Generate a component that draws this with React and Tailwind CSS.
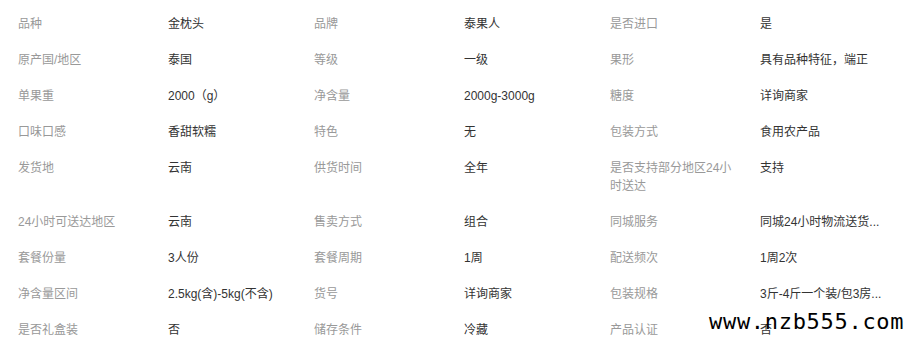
import React from 'react'

const rows = [
  ['品种', '金枕头', '品牌', '泰果人', '是否进口', '是'],
  ['原产国/地区', '泰国', '等级', '一级', '果形', '具有品种特征，端正'],
  ['单果重', '2000（g）', '净含量', '2000g-3000g', '糖度', '详询商家'],
  ['口味口感', '香甜软糯', '特色', '无', '包装方式', '食用农产品'],
  ['发货地', '云南', '供货时间', '全年', '是否支持部分地区24小时送达', '支持'],
  ['24小时可送达地区', '云南', '售卖方式', '组合', '同城服务', '同城24小时物流送货...'],
  ['套餐份量', '3人份', '套餐周期', '1周', '配送频次', '1周2次'],
  ['净含量区间', '2.5kg(含)-5kg(不含)', '货号', '详询商家', '包装规格', '3斤-4斤一个装/包3房...'],
  ['是否礼盒装', '否', '储存条件', '冷藏', '产品认证', '否'],
]

function Row({ cells }) {
  return (
    <div className="flex items-start py-[9px] leading-[18px]">
      {cells.map((text, i) =>
        i % 2 === 0 ? (
          <div key={i} className="w-[150px] shrink-0 pr-[26px] text-[#999]">
            {text}
          </div>
        ) : (
          <div key={i} className="w-[146px] shrink-0 pr-[20px] text-[#333] whitespace-nowrap overflow-hidden">
            {text}
          </div>
        )
      )}
    </div>
  )
}

export default function App() {
  return (
    <div
      className="relative w-[914px] h-[357px] overflow-hidden bg-white pt-[6px] pl-[18px] text-[12px]"
      style={{ fontFamily: '"Liberation Sans", "Noto Sans CJK SC", sans-serif' }}
    >
      {rows.map((r, i) => (
        <Row key={i} cells={r} />
      ))}
      <div
        className="absolute left-[709px] top-[309px] text-[22px] leading-[26px] tracking-[0.7px] text-black"
        style={{ fontFamily: '"DejaVu Sans Mono", monospace' }}
      >
        www.nzb555.com
      </div>
    </div>
  )
}
